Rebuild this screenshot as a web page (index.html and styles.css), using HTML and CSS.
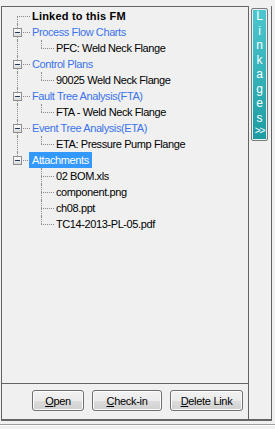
FILE: index.html
```html
<!DOCTYPE html>
<html lang="en">
<head>
  <meta charset="UTF-8">
  <title>Linkages</title>
  <link rel="stylesheet" href="styles.css">
</head>
<body>
  <div class="frame">
    <div class="panel">
      <!-- tree of linked items -->
      <div class="tree">
        <div class="node"><span class="cell first"></span><span class="label root">Linked to this FM</span></div>

        <div class="node"><span class="cell tee"><i class="box"></i></span><span class="label group">Process Flow Charts</span></div>
        <div class="node"><span class="cell line"></span><span class="cell elbow"></span><span class="label">PFC: Weld Neck Flange</span></div>

        <div class="node"><span class="cell tee"><i class="box"></i></span><span class="label group">Control Plans</span></div>
        <div class="node"><span class="cell line"></span><span class="cell elbow"></span><span class="label">90025 Weld Neck Flange</span></div>

        <div class="node"><span class="cell tee"><i class="box"></i></span><span class="label group">Fault Tree Analysis(FTA)</span></div>
        <div class="node"><span class="cell line"></span><span class="cell elbow"></span><span class="label">FTA - Weld Neck Flange</span></div>

        <div class="node"><span class="cell tee"><i class="box"></i></span><span class="label group">Event Tree Analysis(ETA)</span></div>
        <div class="node"><span class="cell line"></span><span class="cell elbow"></span><span class="label">ETA: Pressure Pump Flange</span></div>

        <div class="node"><span class="cell elbow"><i class="box"></i></span><span class="label group selected">Attachments</span></div>
        <div class="node"><span class="cell"></span><span class="cell tee"></span><span class="label">02 BOM.xls</span></div>
        <div class="node"><span class="cell"></span><span class="cell tee"></span><span class="label">component.png</span></div>
        <div class="node"><span class="cell"></span><span class="cell tee"></span><span class="label">ch08.ppt</span></div>
        <div class="node"><span class="cell"></span><span class="cell elbow"></span><span class="label">TC14-2013-PL-05.pdf</span></div>
      </div>

      <div class="actions">
        <button class="btn btn-open"><u>O</u>pen</button>
        <button class="btn btn-checkin"><u>C</u>heck-in</button>
        <button class="btn btn-delete"><u>D</u>elete Link</button>
      </div>
    </div>

    <div class="side">
      <button class="linkages">L<br>i<br>n<br>k<br>a<br>g<br>e<br>s<br><span class="more">&gt;&gt;</span></button>
    </div>
  </div>
  <div class="footer"></div>
</body>
</html>
```

FILE: styles.css
```css
body {
  margin: 0;
  background: #f0f0f0;
  font-family: "Liberation Sans", Arial, sans-serif;
  font-size: 11px;
  color: #000;
}
.frame {
  display: flex;
  padding: 6px 0 0 1px;
  height: 415px;
}
.panel {
  width: 248px;
  box-sizing: border-box;
  border: 1px solid #646464;
  border-bottom-width: 2px;
  display: flex;
  flex-direction: column;
}
.tree {
  flex: 1;
  padding-top: 1px;
}
.node {
  display: flex;
  height: 16px;
  line-height: 16px;
  white-space: nowrap;
}
/* tree connector cells, 24px per level */
.cell {
  position: relative;
  width: 24px;
  flex: none;
}
.cell::before,
.cell::after {
  content: "";
  position: absolute;
}
.line::before,
.tee::before {
  left: 15px;
  top: 0;
  bottom: 0;
  border-left: 1px dotted #8a8a8a;
}
.elbow::before {
  left: 15px;
  top: 0;
  height: 8px;
  border-left: 1px dotted #8a8a8a;
}
.first::before {
  left: 15px;
  top: 8px;
  bottom: 0;
  border-left: 1px dotted #8a8a8a;
}
.first::after,
.tee::after,
.elbow::after {
  left: 15px;
  top: 8px;
  width: 13px;
  border-top: 1px dotted #8a8a8a;
}
.box {
  position: absolute;
  left: 11px;
  top: 4px;
  width: 7px;
  height: 7px;
  border: 1px solid #8e8f8f;
  background: linear-gradient(#ffffff, #dadada);
  z-index: 1;
}
.box::after {
  content: "";
  position: absolute;
  left: 1px;
  top: 3px;
  width: 5px;
  height: 1px;
  background: #1e3a5f;
}
.label {
  margin-left: 3px;
  padding: 0 3px;
  letter-spacing: -0.4px;
}
.root {
  font-weight: bold;
  letter-spacing: 0.2px;
}
.group {
  color: #3b73ec;
}
.selected {
  background: #3399ff;
  color: #fff;
}
.actions {
  border-top: 1px solid #646464;
  height: 29px;
  display: flex;
  justify-content: flex-end;
  align-items: flex-start;
  gap: 8px;
  padding: 6px 5px 0 0;
}
.btn {
  height: 21px;
  padding: 0;
  font-family: "Liberation Sans", Arial, sans-serif;
  font-size: 11px;
  letter-spacing: -0.3px;
  color: #000;
  border: 1px solid #707070;
  border-radius: 3px;
  background: linear-gradient(#f2f2f2 0%, #ebebeb 50%, #dddddd 51%, #cfcfcf 100%);
  box-shadow: inset 0 0 0 1px #fcfcfc;
}
.btn-open { width: 52px; }
.btn-checkin { width: 70px; }
.btn-delete { width: 73px; }
.side {
  width: 23px;
  box-sizing: border-box;
  border-right: 1px solid #646464;
  border-bottom: 2px solid #646464;
  padding: 2px 0 0 2px;
}
.linkages {
  width: 17px;
  height: 133px;
  padding: 0;
  border: 1px solid #7a7a7a;
  border-radius: 2px;
  box-shadow: inset 0 0 0 1px #e8f4f5;
  background: linear-gradient(#4cc7cf, #1e9ba2);
  color: #fff;
  font-family: "Liberation Sans", Arial, sans-serif;
  font-size: 12px;
  line-height: 14.5px;
  display: flex;
  flex-direction: column;
  align-items: center;
  justify-content: flex-start;
  text-align: center;
}
.linkages .more {
  font-size: 10px;
  letter-spacing: -1px;
  line-height: 12px;
}
.footer {
  margin-top: 3px;
  border-top: 1px solid #a0a0a0;
  border-bottom: 1px solid #fff;
}
```
